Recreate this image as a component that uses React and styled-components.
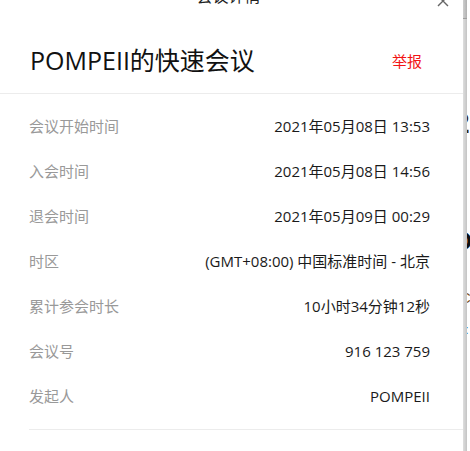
import React from "react";
import styled, { createGlobalStyle } from "styled-components";

const Global = createGlobalStyle`
  html, body { margin: 0; padding: 0; background: #fff; }
  body { font-family: "Open Sans", "Noto Sans CJK SC", sans-serif; }
`;

const Page = styled.div`
  display: flex;
  width: 470px;
  height: 451px;
  overflow: hidden;
  background: #fff;
`;

const Panel = styled.div`
  width: 463px;
  flex: none;
  display: flex;
  flex-direction: column;
  background: #fff;
`;

const Header = styled.div`
  display: grid;
  grid-template-columns: 1fr auto 1fr;
  align-items: center;
  height: 24px;
  margin-top: -16px;
  font-size: 16px;
  line-height: 24px;
  color: #222;
`;

const HeaderTitle = styled.div`
  grid-column: 2;
  padding-right: 6px;
`;

const Close = styled.button`
  grid-column: 3;
  justify-self: end;
  margin: 9px 14px 0 0;
  padding: 0;
  border: 0;
  background: none;
  width: 12px;
  height: 12px;
  display: flex;
`;

const TitleRow = styled.div`
  display: flex;
  align-items: center;
  justify-content: space-between;
  margin-top: 35px;
  padding: 0 41px 16px 30px;
  border-bottom: 1px solid #ececec;
`;

const Title = styled.h1`
  margin: 0;
  font-size: 25px;
  line-height: 34px;
  font-weight: 400;
  color: #111;
`;

const Report = styled.a`
  font-size: 15px;
  color: #f21414;
  text-decoration: none;
  cursor: pointer;
`;

const List = styled.div`
  display: flex;
  flex-direction: column;
  margin-left: 29px;
  padding: 9px 33px 11px 0;
  border-bottom: 1px solid #ececec;
`;

const Row = styled.div`
  display: flex;
  align-items: center;
  justify-content: space-between;
  height: 45px;
  font-size: 15px;
`;

const Label = styled.span`
  color: #999;
`;

const Value = styled.span`
  color: #1a1a1a;
`;

const Edge = styled.div`
  width: 4px;
  flex: none;
  display: flex;
  flex-direction: column;
  background: linear-gradient(to right, #dedede, #c4c4c4);
`;

const EdgeTop = styled.div`
  height: 18px;
  background: linear-gradient(to right, #cfcfcf, #b0b0b0);
  border-bottom: 1px solid #9e9e9e;
`;

const Backdrop = styled.div`
  flex: 1;
  display: flex;
  flex-direction: column;
  overflow: hidden;
  white-space: nowrap;
  font-family: "Liberation Sans", sans-serif;
`;

const Frag = styled.div`
  margin-top: ${(p) => p.$top}px;
  margin-left: ${(p) => p.$left}px;
  font-size: ${(p) => p.$size}px;
  font-weight: ${(p) => (p.$bold ? 700 : 400)};
  line-height: 1;
  color: ${(p) => p.$color};
`;

const rows = [
  ["会议开始时间", "2021年05月08日 13:53"],
  ["入会时间", "2021年05月08日 14:56"],
  ["退会时间", "2021年05月09日 00:29"],
  ["时区", "(GMT+08:00) 中国标准时间 - 北京"],
  ["累计参会时长", "10小时34分钟12秒"],
  ["会议号", "916 123 759"],
  ["发起人", "POMPEII"],
];

export default function App() {
  return (
    <>
      <Global />
      <Page>
        <Panel>
          <Header>
            <HeaderTitle>会议详情</HeaderTitle>
            <Close aria-label="关闭">
              <svg width="12" height="12" viewBox="0 0 12 12">
                <path d="M1 1 L11 11 M11 1 L1 11" stroke="#666" strokeWidth="1.4" fill="none" />
              </svg>
            </Close>
          </Header>
          <TitleRow>
            <Title>POMPEII的快速会议</Title>
            <Report>举报</Report>
          </TitleRow>
          <List>
            {rows.map(([l, v]) => (
              <Row key={l}>
                <Label>{l}</Label>
                <Value>{v}</Value>
              </Row>
            ))}
          </List>
        </Panel>
        <Edge>
          <EdgeTop />
        </Edge>
        <Backdrop>
          <Frag $top={108} $left={-14} $size={30} $bold $color="#3a2a10">2</Frag>
          <Frag $top={90} $left={-15} $size={26} $bold $color="#111">O</Frag>
          <Frag $top={36} $left={-7} $size={15} $color="#7a4a10">C</Frag>
          <Frag $top={18} $left={-2} $size={13} $color="#1d4f91">:</Frag>
        </Backdrop>
      </Page>
    </>
  );
}
